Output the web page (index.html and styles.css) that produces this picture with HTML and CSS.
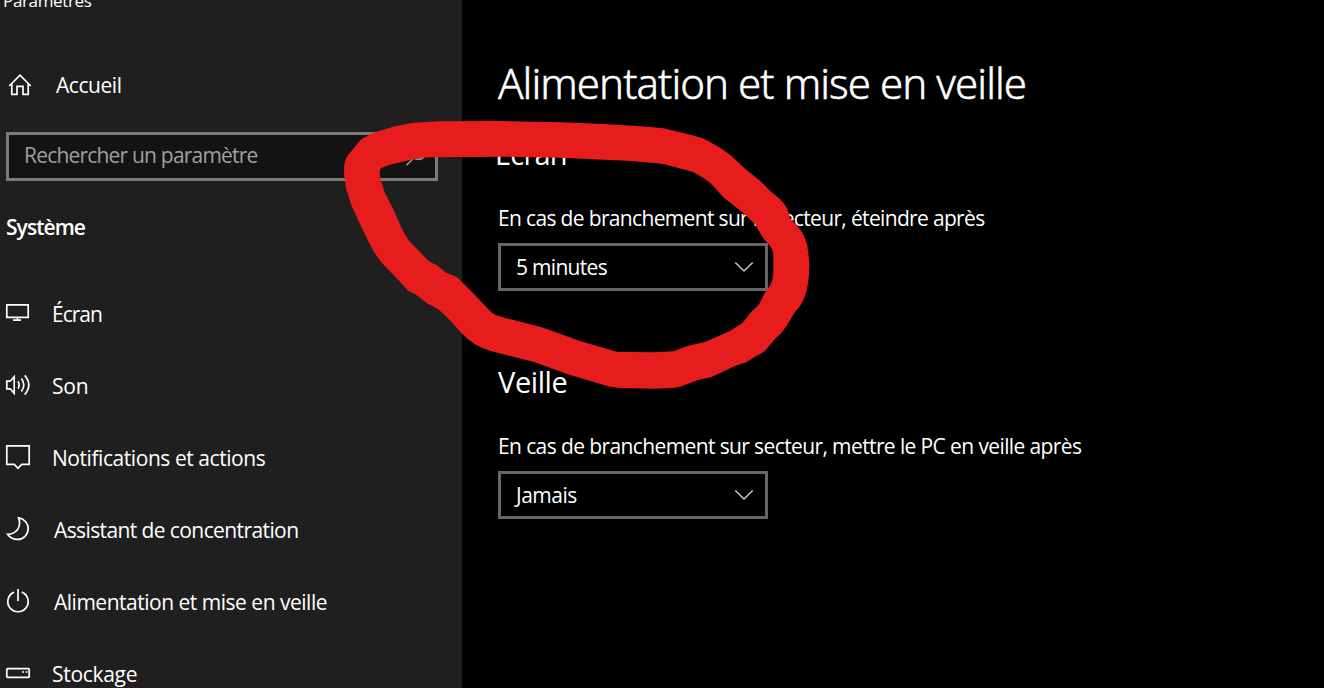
FILE: index.html
```
<!DOCTYPE html>
<html lang="fr">
<head>
<meta charset="utf-8">
<title>Paramètres</title>
<link rel="stylesheet" href="styles.css">
</head>
<body>
<div class="window">
  <aside class="sidebar">
    <div class="app-title">Paramètres</div>
    <a class="home">
      <svg class="icon" viewBox="0 0 26 26"><path d="M2.2 14 13 3.2 23.8 14M4.8 12v10.4h5.2v-8h6v8h5.2V12"/></svg>
      <span>Accueil</span>
    </a>
    <div class="search">
      <span class="placeholder">Rechercher un paramètre</span>
      <svg class="search-icon" viewBox="0 0 22 22"><circle cx="13.5" cy="8" r="6.5"/><path d="M9 12.8 1.5 20.3"/></svg>
    </div>
    <h2 class="section">Système</h2>
    <nav class="nav">
      <a class="item screen">
        <svg class="icon" viewBox="0 0 26 26"><path d="M1.8 4.8h21.4v12.6H1.8zM12.5 17.4v2.8M8 20.2h8"/></svg>
        <span>Écran</span>
      </a>
      <a class="item sound">
        <svg class="icon" viewBox="0 0 26 26"><path d="M1.8 9.2h3.4l4-4.4v16.4l-4-4.4H1.8zM13 9.2q2.2 3.8 0 7.6M16.4 6.6q4.8 6.4 0 12.8M19.7 3.4q8.2 9.6 0 19.2"/></svg>
        <span>Son</span>
      </a>
      <a class="item notifications">
        <svg class="icon" viewBox="0 0 26 26"><path d="M1.8 1.8h22.4v18.6h-7.4L13 24.2l-3.8-3.8H1.8z"/></svg>
        <span>Notifications et actions</span>
      </a>
      <a class="item focus">
        <svg class="icon" viewBox="0 0 26 26"><path d="M13.6 1.9c5.4.8 9.6 5.2 9.6 10.7 0 6.1-4.8 10.8-10.8 10.8-4.2 0-7.8-2-9.8-5.1 7.8-.2 14.6-6.6 11-16.4z"/></svg>
        <span>Assistant de concentration</span>
      </a>
      <a class="item power">
        <svg class="icon" viewBox="0 0 26 26"><path d="M13 1v12M9.2 4.1a10.2 10.2 0 1 0 7.6 0"/></svg>
        <span>Alimentation et mise en veille</span>
      </a>
      <a class="item storage">
        <svg class="icon" viewBox="0 0 26 26"><rect x="1.8" y="8.7" width="22.4" height="8.6" rx=".8"/><path d="M17 12h2M20.5 12h2"/></svg>
        <span>Stockage</span>
      </a>
    </nav>
  </aside>
  <main class="content">
    <h1 class="title">Alimentation et mise en veille</h1>
    <section class="group display">
      <h2 class="group-title">Écran</h2>
      <p class="label">En cas de branchement sur le secteur, éteindre après</p>
      <div class="select"><span>5 minutes</span>
        <svg class="chevron" viewBox="0 0 20 12"><path d="m1.3 1.4 8.7 8.7 8.7-8.7"/></svg></div>
    </section>
    <section class="group sleep">
      <h2 class="group-title">Veille</h2>
      <p class="label">En cas de branchement sur secteur, mettre le PC en veille après</p>
      <div class="select"><span>Jamais</span>
        <svg class="chevron" viewBox="0 0 20 12"><path d="m1.3 1.4 8.7 8.7 8.7-8.7"/></svg></div>
    </section>
  </main>
  <svg class="marker" viewBox="0 0 1324 688"><path fill-rule="evenodd" d="M500 121L440 121.3L413 122.7L393 126.7L375 132.3L363 138Q359 141 356.7 144.7L348 155Q344 161 344.1 168L344.3 176.7L346 188L351.7 206L360 224L369.3 243.3Q374 253 381.7 262.7L396.7 278.3L408.3 290.7L415 294L428.3 304L438.3 309.3L446.7 316.7L461.7 333.3Q468 340 475 344.3Q483 349 491.7 351.3L533.3 361.7L570 375L610 386.7L620 388L653.3 388.7L673 388L680 386.7L698.3 380L711.7 377L735 366L746.7 362L756.7 355.7Q761 354 765 350.7L775 339Q782 333 786.7 325.7L795 311.7Q799 308 801.7 303.3Q806 296 807.7 285Q809.5 275 809.3 263.3L808.3 253.3Q808 245 805 238.3Q802 231 797.3 226L790 218.3Q789 212 786.7 207.7Q784 203 780 199.3L770 190.7L760 180.7L743.3 167.3L731.7 156Q720 147 708.3 141Q700 137 691.7 135L663.3 128.3Q650 127 636.7 126L603.3 124L560 122.3ZM430 157.3L500 156.7L560 157.7L631.7 161L663.3 164L693.3 172Q703 177 711.7 184.3L723.3 197.3L741.7 211.7L755 224L758.3 230L763.3 238.3L770 246Q773 249 773.3 253.3L773.3 273.3Q773 279 771 284L764 294.3L759.3 304L750 313.3L742.7 322.7L730 331L705 342L688.3 345.7L673.3 351.3L653.3 352.3L616.7 351.7L580 341L543.3 327.7L501.7 317Q496 315.5 491.7 312.7L473.3 293.3L461.7 281.7Q458 277 454 275.7L446.7 273L436.7 265.3L428.3 260.7L409 240.7Q404 234 401.7 228.3L393.3 209.3L385 193.3L380.3 178.3L379.7 171Q379.7 169 381.7 167.7L391.7 164.3L410 160Q420 157.5 430 157.3Z"/></svg>
</div>
</body>
</html>
```
FILE: styles.css
```
* { box-sizing: border-box; }
body {
  margin: 0;
  overflow: hidden;
  background: #000;
  color: #fff;
  font: 400 21px/30px "Open Sans", "Noto Sans", sans-serif;
}
h1, h2, p { margin: 0; font-weight: 400; }
svg { display: block; flex: none; fill: none; stroke: #fff; }
span { white-space: nowrap; }

.window {
  position: relative;
  display: flex;
  height: 688px;
  overflow: hidden;
}

.sidebar {
  width: 462px;
  flex: none;
  background: #1f1f1f;
}
.app-title {
  margin: -11px 0 0 3px;
  font-size: 17px;
  line-height: 24px;
  letter-spacing: -0.35px;
}
.home {
  display: flex;
  align-items: center;
  gap: 23px;
  height: 48px;
  margin-top: 48px;
  padding-left: 7px;
  letter-spacing: -0.45px;
}
.icon { width: 26px; height: 26px; stroke-width: 1.7; }

.search {
  display: flex;
  justify-content: space-between;
  width: 432px;
  height: 49px;
  margin: 23px 0 0 6px;
  padding: 5px 8px 0 15px;
  border: 3px solid #7a7a7a;
  background: #131313;
}
.placeholder { color: #a0a0a0; letter-spacing: -0.8px; }
.search-icon { width: 22px; height: 22px; margin-top: 5px; stroke: #a0a0a0; stroke-width: 1.5; }

.section {
  margin: 31px 0 0 6px;
  font-size: 21px;
  font-weight: 600;
  letter-spacing: -0.95px;
}

.nav { margin-top: 36px; }
.item {
  display: flex;
  align-items: center;
  height: 72px;
  padding-left: 5px;
  gap: 21px;
}
.item .icon { margin-top: -3px; }
.screen { letter-spacing: -1px; }
.sound { letter-spacing: -0.2px; }
.notifications { letter-spacing: -0.44px; }
.focus { gap: 23px; letter-spacing: -0.6px; }
.power { gap: 23px; letter-spacing: -0.49px; }
.storage { letter-spacing: -0.3px; }

.content { flex: 1; padding: 53px 0 0 36px; }
.title {
  font: 300 42px/60px "Noto Sans", "Open Sans", sans-serif;
  letter-spacing: -0.95px;
  -webkit-text-stroke: 0.5px #fff;
}
.group { margin-top: 21px; }
.group-title { font-size: 29px; line-height: 40px; letter-spacing: -0.4px; }
.display .group-title { margin-left: -3px; letter-spacing: -0.8px; }
.label { margin-top: 29px; white-space: nowrap; letter-spacing: -0.66px; }
.sleep { margin-top: 71px; }
.sleep .label { letter-spacing: -0.61px; }

.select {
  display: flex;
  align-items: center;
  justify-content: space-between;
  width: 270px;
  height: 48px;
  margin-top: 10px;
  padding: 0 11px 0 15px;
  border: 3px solid #666;
  letter-spacing: -0.7px;
}
.sleep .select { letter-spacing: -0.5px; }
.chevron { width: 20px; height: 12px; stroke: #ccc; stroke-width: 1.4; }

/* Freehand highlight drawn over the window */
.marker {
  position: absolute;
  inset: 0;
  width: 1324px;
  height: 688px;
  fill: #e71d1d;
  stroke: none;
  pointer-events: none;
}
```
